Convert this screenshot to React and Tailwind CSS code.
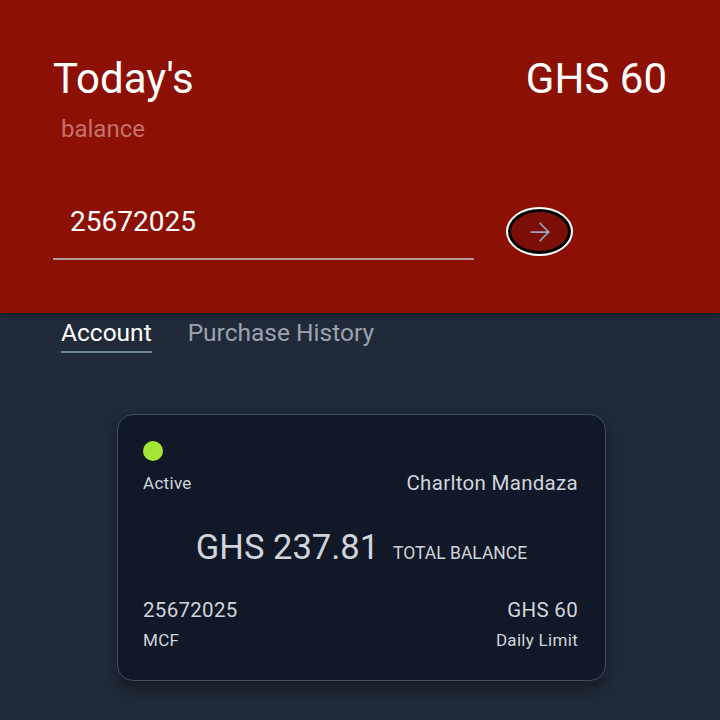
import { ArrowRight } from 'lucide-react';

function Header() {
  return (
    <div className="bg-[#8d1005] h-[313px] px-[53px] pt-[54px] shadow-[0_2px_4px_rgba(0,0,0,0.35)] relative z-10">
      <div className="flex justify-between items-start">
        <h1 className="text-[42px] leading-[50px] text-white">Today's</h1>
        <div className="text-[42px] leading-[50px] text-white">GHS 60</div>
      </div>
      <p className="ml-2 mt-[11px] text-[24px] leading-[28px] text-[#c6716b]">balance</p>
      <div className="flex items-start mt-[63px]">
        <div className="w-[421px] border-b-2 border-[#b39a98] pl-[17px] pb-[20px]">
          <div className="text-[28px] leading-[32px] text-white">25672025</div>
        </div>
        <button className="ml-[32px] mt-[1px] w-[67px] h-[49px] rounded-[50%] bg-white p-[2px]">
          <div className="w-full h-full rounded-[50%] border-[3px] border-black bg-[#7c0e08] flex items-center justify-center">
            <ArrowRight size={30} strokeWidth={1.4} className="text-[#9aa8c6]" />
          </div>
        </button>
      </div>
    </div>
  );
}

function Tabs() {
  return (
    <div className="flex gap-[36px] px-[61px] pt-[6px]">
      <div className="text-[24.5px] leading-[28px] text-white pb-[4px] border-b-2 border-[#6b8299]">Account</div>
      <div className="text-[24.5px] leading-[28px] text-[#9ca3af]">Purchase History</div>
    </div>
  );
}

function AccountCard() {
  return (
    <div className="ml-[117px] mt-[61px] w-[489px] h-[267px] rounded-[16px] border border-[#3d4f66] bg-[#111827] pl-[25px] pr-[27px] pt-[26px] shadow-[0_8px_16px_rgba(0,0,0,0.35)] text-[#d1d5db] tracking-[0.3px]">
      <div className="w-[20px] h-[20px] rounded-full bg-[#a3e635]" />
      <div className="flex justify-between items-center mt-[10px] h-[24px]">
        <span className="text-[17px] leading-[20px]">Active</span>
        <span className="text-[20.5px] leading-[24px]">Charlton Mandaza</span>
      </div>
      <div className="flex justify-center items-baseline gap-[14px] mt-[32px] pl-[2px]">
        <span className="text-[34.5px] leading-[40px] tracking-normal">GHS 237.81</span>
        <span className="text-[17.5px] leading-[20px] tracking-normal">TOTAL BALANCE</span>
      </div>
      <div className="flex justify-between mt-[31px]">
        <div>
          <div className="text-[20.5px] leading-[24px]">25672025</div>
          <div className="text-[17px] leading-[20px] mt-[8px]">MCF</div>
        </div>
        <div className="text-right">
          <div className="text-[20.5px] leading-[24px]">GHS 60</div>
          <div className="text-[17px] leading-[20px] mt-[8px]">Daily Limit</div>
        </div>
      </div>
    </div>
  );
}

export default function App() {
  return (
    <div className="w-[720px] h-[720px] overflow-hidden bg-gradient-to-b from-[#1f2937] to-[#202a38]" style={{ fontFamily: 'Roboto, "Liberation Sans", sans-serif' }}>
      <Header />
      <Tabs />
      <AccountCard />
    </div>
  );
}
